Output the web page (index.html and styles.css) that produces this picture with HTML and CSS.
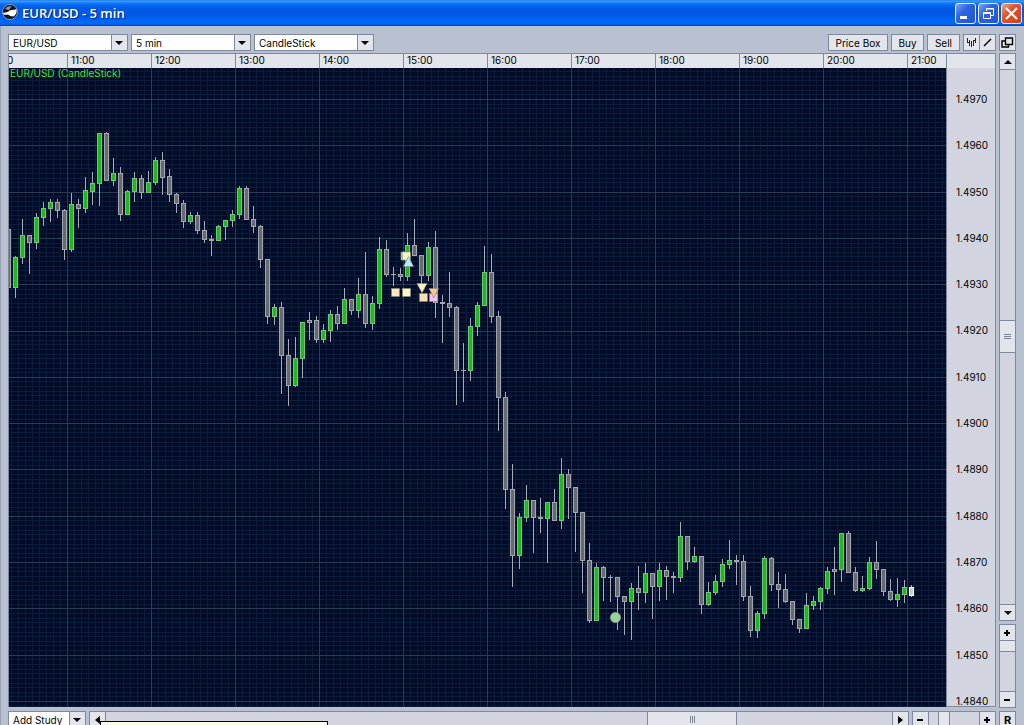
FILE: index.html
```html
<!DOCTYPE html>
<html lang="en">
<head>
<meta charset="utf-8">
<title>EUR/USD - 5 min</title>
<link rel="stylesheet" href="styles.css">
</head>
<body>
<header class="titlebar">
  <svg class="logo" width="16" height="16" viewBox="0 0 16 16" aria-hidden="true">
    <circle cx="8" cy="8" r="7.5" fill="#10141c"/>
    <path d="M3 4.500Q6 1.500 10 2.500Q8 3.500 7 6Q5 6 3 4.500Z" fill="#8d96a6"/>
    <path d="M1 8.500Q4 9 6.500 7.500Q7.500 5.500 10.500 6Q12.500 6 14.500 5Q15.500 10 11.500 12.500Q8 12.500 6 10.500Q3 11 1.500 10.500Z" fill="#fff"/>
    <circle cx="8" cy="8" r="7.500" fill="none" stroke="#c9d2e2" stroke-width=".6"/>
  </svg>
  <h1 class="title">EUR/USD - 5 min</h1>
  <button class="win" aria-label="Minimize"><svg width="19" height="19" viewBox="0 0 19 19"><rect x="4" y="12" width="7" height="3" fill="#fff"/></svg></button>
  <button class="win" aria-label="Restore"><svg width="19" height="19" viewBox="0 0 19 19" fill="none" stroke="#fff"><path d="M7.500 7V4.500H14.500V11.500H12M7 5h8"/><path d="M4.500 8.500H11.500V14.500H4.500ZM4 9.500h8"/></svg></button>
  <button class="win close" aria-label="Close"><svg width="19" height="19" viewBox="0 0 19 19"><path d="M4 4L15 15M15 4L4 15" stroke="#fff" stroke-width="2.200"/></svg></button>
</header>

<main class="window">
  <div class="toolbar">
    <label class="combo"><select aria-label="Symbol"><option>EUR/USD</option></select><span class="arrow down"></span></label>
    <label class="combo"><select aria-label="Period"><option>5 min</option></select><span class="arrow down"></span></label>
    <label class="combo"><select aria-label="Chart type"><option>CandleStick</option></select><span class="arrow down"></span></label>
    <span class="spacer"></span>
    <button class="btn wide">Price Box</button>
    <button class="btn">Buy</button>
    <button class="btn">Sell</button>
    <div class="pair">
      <button class="sq" aria-label="Bars"><svg width="15" height="15" viewBox="0 0 15 15" shape-rendering="crispEdges"><path d="M3.500 3v5M5.500 5v6M7.500 6v6M9.500 5v6M11.500 3v5M4 7.500h1M10 5.500h1" stroke="#222"/></svg></button>
      <button class="sq" aria-label="Draw line"><svg width="15" height="15" viewBox="0 0 15 15"><path d="M4 11L11 4" stroke="#000" stroke-width="1.500"/></svg></button>
    </div>
    <button class="sq detach" aria-label="Detach"><svg width="15" height="15" viewBox="0 0 15 15" fill="#e2e5ec" stroke="#000" stroke-width="1.400"><path d="M2 6H8.500V12H2Z"/><path d="M5.500 3H12.500V9.500H5.500Z"/></svg></button>
  </div>

  <section class="chart">
    <div class="times">
      <span class="cut">0</span><span>11:00</span><span>12:00</span><span>13:00</span><span>14:00</span><span>15:00</span><span>16:00</span><span>17:00</span><span>18:00</span><span>19:00</span><span>20:00</span><span>21:00</span>
    </div>
    <div class="corner"></div>
    <div class="pane">
      <svg class="plot" id="plot" role="img" aria-label="EUR/USD five minute candlestick chart"></svg>
      <p class="legend">EUR/USD (CandleStick)</p>
    </div>
    <div class="prices">
      <span>1.4970</span><span>1.4960</span><span>1.4950</span><span>1.4940</span><span>1.4930</span><span>1.4920</span><span>1.4910</span><span>1.4900</span><span>1.4890</span><span>1.4880</span><span>1.4870</span><span>1.4860</span><span>1.4850</span><span>1.4840</span>
    </div>
  </section>

  <aside class="side">
    <div class="vbar scroll">
      <button class="sq" aria-label="Scroll up"><span class="arrow up"></span></button>
      <div class="track upper"></div>
      <div class="thumb vthumb"><i></i><i></i><i></i></div>
      <div class="track lower"></div>
      <button class="sq" aria-label="Scroll down"><span class="arrow down"></span></button>
    </div>
    <div class="vbar zoom">
      <button class="sq" aria-label="Zoom in vertically"><span class="plus"></span></button>
      <div class="thumb zthumb"></div>
      <div class="track lower"></div>
      <button class="sq" aria-label="Zoom out vertically"><span class="minus"></span></button>
    </div>
  </aside>

  <footer class="bottom">
    <label class="combo study"><select aria-label="Add study"><option>Add Study</option></select><span class="arrow down"></span></label>
    <div class="hbar hscroll">
      <button class="sq" aria-label="Scroll left"><span class="arrow left"></span></button>
      <div class="track before"></div>
      <div class="thumb hthumb"><i></i><i></i><i></i></div>
      <div class="track after"></div>
      <button class="sq" aria-label="Scroll right"><span class="arrow right"></span></button>
    </div>
    <div class="hbar hzoom">
      <button class="sq" aria-label="Zoom out horizontally"><span class="minus"></span></button>
      <div class="track short"></div>
      <div class="thumb"></div>
      <div class="track long"></div>
      <button class="sq" aria-label="Zoom in horizontally"><span class="plus"></span></button>
    </div>
    <button class="sq reset">R</button>
    <div class="tip"></div>
  </footer>
</main>
<script src="chart.js"></script>
</body>
</html>
```
FILE: styles.css
```css
* { box-sizing: border-box; }
body {
  margin: 0;
  height: 100vh;
  overflow: hidden;
  display: flex;
  flex-direction: column;
  background: #b9c1d1;
  color: #000;
  font: 10px/12px Inter, "Liberation Sans", sans-serif;
}
button, select { font: inherit; color: inherit; margin: 0; padding: 0; border-radius: 0; }

.titlebar {
  flex: none;
  height: 26px;
  display: flex;
  align-items: center;
  gap: 2px;
  padding: 0 2px;
  background: linear-gradient(#1c7df0 0, #3d9bff 1px, #0a6cf4 4px, #0058e4 9px, #0059e6 15px, #0068fa 21px, #0066f4 24px, #0040b4 26px);
}
.logo { flex: none; margin-bottom: 2px; }
.title {
  flex: 1;
  margin: 0 0 0 2px;
  color: #fff;
  font: 600 13px/20px "Open Sans", sans-serif;
  text-shadow: 1px 1px 1px #06257a;
}
.win {
  width: 21px;
  height: 21px;
  border: 1px solid #e8f0ff;
  border-radius: 3px;
  background: linear-gradient(135deg, #7ba4f4, #2f63de 40%, #1f55d8);
}
.win.close { background: linear-gradient(135deg, #f0a088, #e0532e 40%, #cc3f18); }
.win svg { display: block; }

.window {
  flex: 1;
  min-height: 0;
  display: grid;
  grid-template-columns: minmax(0, 1fr) 17px;
  grid-template-rows: 17px minmax(0, 1fr) 14px;
  column-gap: 3px;
  padding: 8px 8px 0 7px;
  border-left: 1px solid #98a2b4;
}
.toolbar, .bottom { grid-column: 1 / -1; display: flex; }
.toolbar { gap: 3px; }
.spacer { flex: 1; }

.combo { display: flex; position: relative; width: 120px; height: 17px; }
.combo select {
  appearance: none;
  width: 100%;
  height: 17px;
  padding: 0 20px 0 4px;
  border: 1px solid #7f899b;
  outline: 0;
  background: linear-gradient(#7f899b, #7f899b) right 15px top / 1px 100% no-repeat, linear-gradient(#e2e5ec, #e2e5ec) right / 15px 100% no-repeat, #fff;
}
.combo .arrow { position: absolute; right: 5px; top: 7px; pointer-events: none; }
.arrow { display: block; width: 0; height: 0; border: 4px solid transparent; }
.arrow.down { border-top-color: #000; border-bottom-width: 0; }
.arrow.up { border-bottom-color: #000; border-top-width: 0; }
.arrow.left { border-right: 5px solid #000; border-left-width: 0; }
.arrow.right { border-left: 5px solid #000; border-right-width: 0; }

.btn, .sq { border: 1px solid #7f899b; background: #e2e5ec; height: 17px; }
.btn { width: 33px; }
.btn.wide { width: 60px; }
.sq { flex: none; width: 17px; display: flex; align-items: center; justify-content: center; }
.sq svg { flex: none; }
.pair { display: flex; }
.pair .sq + .sq { margin-left: -1px; }

.chart {
  display: grid;
  grid-template-columns: minmax(0, 1fr) 50px;
  grid-template-rows: 15px minmax(0, 1fr);
  margin: 2px 0 4px;
}
.times, .corner { background: #e2e5ec; border: 1px solid #7f899b; border-bottom: 0; }
.times { display: flex; overflow: hidden; border-right: 0; line-height: 13px; }
.times span { flex: none; width: 84px; padding-left: 3px; border-left: 1px solid #7f899b; }
.times .cut { width: 58px; padding: 0; border: 0; text-indent: -2px; overflow: hidden; }
.pane { position: relative; overflow: hidden; background: #000c27; border-left: 1px solid #7f899b; }
.plot { position: absolute; inset: 0; width: 100%; height: 100%; }
.legend { position: relative; margin: 0 0 0 1px; line-height: 11px; color: #3ee23e; }
.prices {
  display: flex;
  flex-direction: column;
  justify-content: space-between;
  overflow: hidden;
  padding: 26px 0 0 9px;
  background: #d2d5e0;
  border: 1px solid #7f899b;
  border-top: 0;
  line-height: 10px;
}

.side { display: flex; flex-direction: column; gap: 3px; margin: 2px 0 3px; }
.vbar { display: flex; flex-direction: column; }
.vbar.scroll { flex: 1; }
.vbar.zoom { height: 84px; }
.track { background: #d2d5e0; border: 0 solid #7f899b; }
.vbar .track { border-width: 0 1px; }
.vbar .upper { flex: 251; }
.vbar .lower { flex: 252; }
.thumb { flex: none; background: #e2e5ec; border: 1px solid #7f899b; display: flex; align-items: center; justify-content: center; }
.vthumb { height: 33px; flex-direction: column; gap: 1px; }
.vthumb i { width: 7px; height: 1px; background: #7c8494; }
.zthumb { height: 11px; border-top: 0; }

.bottom { gap: 3px; position: relative; }
.combo.study { width: 78px; }
.hbar { display: flex; height: 17px; }
.hbar .track { border-width: 1px 0; }
.hscroll { flex: 1; min-width: 0; }
.before { flex: 541; }
.after { flex: 155; }
.hthumb { width: 90px; gap: 1px; }
.hthumb i { width: 1px; height: 7px; background: #7c8494; }
.hzoom { width: 84px; }
.hzoom .thumb { width: 12px; }
.short { flex: 9; }
.long { flex: 29; }
.reset { font-weight: 700; font-size: 11px; }
.plus, .minus { display: block; width: 7px; height: 6px; background: linear-gradient(#000, #000) left center / 6px 2px no-repeat; }
.plus { background: linear-gradient(#000, #000) left center / 6px 2px no-repeat, linear-gradient(#000, #000) 2px 0 / 2px 6px no-repeat; }
.tip { position: absolute; left: 92px; top: 10px; width: 228px; height: 18px; border: 1px solid #000; background: #ffffe6; }
```
FILE: chart.js
```js
const NS = 'http://www.w3.org/2000/svg';
const plot = document.getElementById('plot');
// Chart values are in window units; the pane starts at this origin.
const ORIGIN = { x: 9, y: 68 };

function add(parent, name, attrs) {
  const el = document.createElementNS(NS, name);
  for (const key in attrs) el.setAttribute(key, attrs[key]);
  parent.appendChild(el);
  return el;
}
const root = add(plot, 'g', { transform: `translate(${-ORIGIN.x} ${-ORIGIN.y})`, 'shape-rendering': 'crispEdges' });
const box = (x, y, w, h, fill) => add(root, 'rect', { x, y, width: w, height: h, fill });

const SPAN = 4000;
for (let x = 11; x < SPAN; x += 7) box(x, 60, 1, SPAN, '#0c1d3b');
for (let k = -8; k < 500; k++) box(0, Math.round(99 + k * 4.631), SPAN, 1, '#0c1d3b');
for (let x = 67; x < SPAN; x += 84) box(x, 60, 1, SPAN, '#2b3b53');
for (let k = 0; k < 50; k++) box(0, Math.round(99 + k * 46.31), SPAN, 1, '#2b3b53');

// high, body top, body bottom, low, colour (g rising, d falling, w current)
const candles = `229 229 287 287 d|256 257 287 297 g|219 235 257 263 g|235 235 242 273 d|213 217 242 248 g|202 208 217 225 g|199 202 208 221 g|199 202 210 217 d|209 210 249 259 d|193 204 249 251 g|199 204 208 227 d|177 190 208 212 g|172 183 191 204 g|133 133 183 205 g|132 133 180 180 d|158 173 180 185 g|167 173 214 220 d|190 191 214 214 g|172 178 191 201 g|175 178 192 198 d|171 182 192 192 g|157 160 182 184 g|152 160 177 194 d|169 176 194 201 d|193 194 203 212 d|200 203 221 227 d|212 215 221 223 g|212 215 230 233 d|221 230 239 242 d|235 239 240 255 d|225 226 240 240 g|220 220 226 239 g|210 214 220 226 g|186 188 214 218 g|186 188 219 219 d|206 219 226 232 d|225 226 259 267 d|259 259 316 323 d|304 307 316 324 g|302 307 355 393 d|339 355 385 405 d|337 358 385 386 g|322 322 358 377 g|312 320 322 339 d|316 320 339 342 d|324 330 339 342 g|310 314 330 341 g|306 314 323 329 d|288 299 323 323 g|299 299 310 314 d|278 294 310 317 g|252 294 323 327 d|296 303 323 329 g|237 249 303 308 g|240 249 274 276 d|267 274 274 285 d|268 274 276 280 d|233 245 276 280 g|219 245 255 255 d|255 255 275 283 d|242 247 275 280 g|231 247 302 317 d|295 302 303 342 d|272 303 307 316 d|306 307 370 404 d|343 370 370 401 d|318 326 370 380 g|302 305 326 335 g|246 272 305 305 g|254 272 316 322 d|311 316 397 430 d|392 397 489 508 d|464 489 555 586 d|513 517 555 568 g|485 500 517 521 g|500 500 517 552 d|498 517 518 532 d|502 502 518 562 g|489 502 520 520 d|458 474 520 528 g|469 474 487 518 d|487 487 512 551 d|512 512 560 592 d|543 560 620 622 d|563 567 620 620 g|566 567 577 600 d|575 577 577 601 d|577 577 596 629 d|596 596 601 634 d|583 588 601 639 g|566 588 592 609 d|563 573 592 602 g|573 573 586 618 d|563 570 586 600 g|566 570 576 599 d|572 576 577 592 d|522 536 577 581 g|536 536 561 569 d|547 556 561 562 g|556 556 604 613 d|582 592 604 605 g|575 581 592 594 g|559 564 581 586 g|540 560 564 568 g|555 560 561 584 d|555 561 596 600 d|586 596 630 636 d|611 613 630 637 g|556 558 613 618 g|557 558 584 590 d|572 584 589 607 d|574 589 601 602 d|601 601 619 624 d|619 619 628 632 d|593 605 628 628 g|596 601 605 609 g|587 588 601 609 g|567 571 588 593 g|547 569 571 594 d|533 533 569 581 g|531 533 572 572 d|567 572 590 591 d|576 588 590 591 g|557 562 588 589 g|541 562 569 578 d|569 569 591 595 d|579 591 599 600 d|578 594 599 606 g|580 587 594 602 g|585 587 595 596 w`;
const edge = { g: '#6fc67c', d: '#a3a5af', w: '#ffffff' };
const fill = { g: '#1fb81f', d: '#686a70', w: '#c4ccd8' };

candles.split('|').forEach((row, i) => {
  const parts = row.split(' ');
  const [high, top, bottom, low] = parts.map(Number);
  const kind = parts[4];
  const x = 8 + i * 7;
  box(x, high, 1, low - high + 1, '#a9acb8');
  box(x - 2, top, 5, bottom - top + 1, edge[kind]);
  if (bottom - top > 1) box(x - 1, top + 1, 3, bottom - top - 1, fill[kind]);
});

const marks = add(plot, 'g', { transform: `translate(${-ORIGIN.x} ${-ORIGIN.y})`, stroke: '#8b8778', 'stroke-width': '.6' });
const square = (x, y, c) => add(marks, 'rect', { x, y, width: 8, height: 8, fill: c });
const tri = (points, c) => add(marks, 'polygon', { points, fill: c });
square(391.5, 288.5, '#ffe6bc');
square(402.5, 288.5, '#fff5c4');
square(401, 252, '#a8ecf8');
square(402.5, 252, '#fff5c4');
tri('403.500,266.500 413.500,266.500 408.500,256.500', '#a8f0fc');
tri('417,283.500 427,283.500 422,293', '#fff0c0');
square(419.5, 293.5, '#ffe0b4');
square(429.5, 293.5, '#f8c4ec');
tri('429,288.500 438.500,288.500 433.800,298', '#f8c890');
add(marks, 'circle', { cx: 615.5, cy: 617.5, r: 5.2, fill: '#9fcf9f', stroke: '#6f9f7c' });
```
